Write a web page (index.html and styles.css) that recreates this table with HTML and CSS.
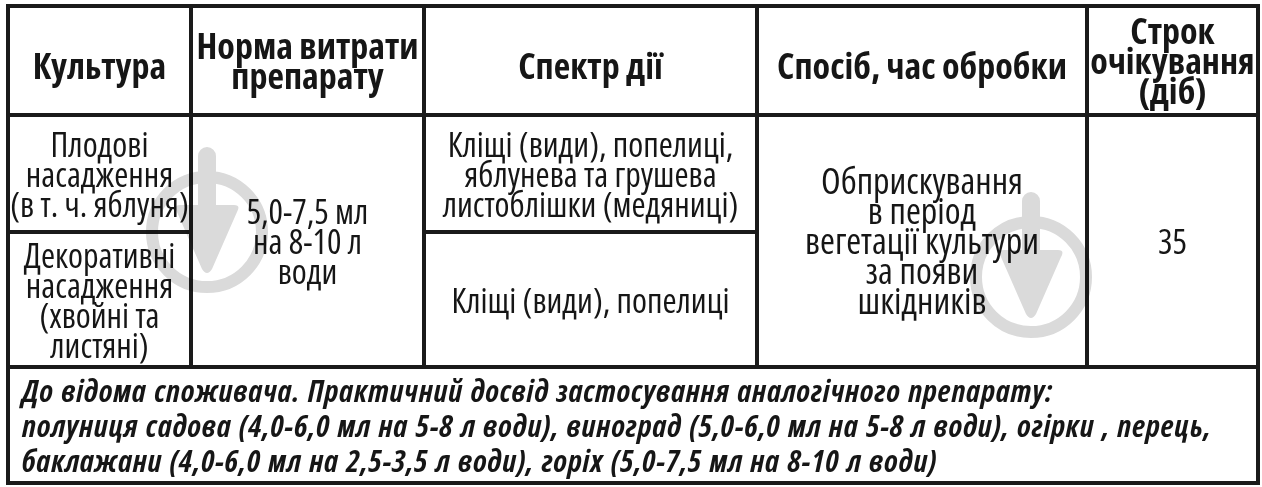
FILE: index.html
```html
<!DOCTYPE html>
<html lang="uk">
<head>
<meta charset="utf-8">
<link rel="stylesheet" href="styles.css">
</head>
<body>
<div class="sheet">
  <table class="grid">
    <colgroup>
      <col class="c1"><col class="c2"><col class="c3"><col class="c4"><col class="c5">
    </colgroup>
    <tr class="head">
      <th class="low">Культура</th>
      <th>Норма витрати<br>препарату</th>
      <th class="low">Спектр дії</th>
      <th class="low">Спосіб, час обробки</th>
      <th>Строк<br>очікування<br>(діб)</th>
    </tr>
    <tr class="top">
      <td class="split">Плодові<br>насадження<br>(в т. ч. яблуня)</td>
      <td rowspan="2">5,0-7,5 мл<br>на 8-10 л<br>води</td>
      <td class="split">Кліщі (види), попелиці,<br>яблунева та грушева<br>листоблішки (медяниці)</td>
      <td rowspan="2" class="method">Обприскування<br>в період<br>вегетації культури<br>за появи<br>шкідників</td>
      <td rowspan="2">35</td>
    </tr>
    <tr class="bottom">
      <td>Декоративні<br>насадження<br>(хвойні та<br>листяні)</td>
      <td>Кліщі (види), попелиці</td>
    </tr>
    <tr class="foot">
      <td colspan="5">До відома споживача. Практичний досвід застосування аналогічного препарату:<br>полуниця садова (4,0-6,0 мл на 5-8 л води), виноград (5,0-6,0 мл на 5-8 л води), огірки , перець,<br>баклажани (4,0-6,0 мл на 2,5-3,5 л води), горіх (5,0-7,5 мл на 8-10 л води)</td>
    </tr>
  </table>
  <svg class="mark mark-a" viewBox="0 0 140 180" width="140" height="180" aria-hidden="true">
    <circle cx="70" cy="95" r="55" fill="none" stroke="#dadada" stroke-width="12"/>
    <path d="M61 19 a9 9 0 0 1 18 0 V68 H97 q7 0 3 7 L75 132 q-5 8 -10 0 L40 75 q-4 -7 3 -7 H61 Z" fill="#dadada"/>
  </svg>
  <svg class="mark mark-b" viewBox="0 0 140 180" width="140" height="180" aria-hidden="true">
    <circle cx="70" cy="95" r="55" fill="none" stroke="#dadada" stroke-width="12"/>
    <path d="M61 19 a9 9 0 0 1 18 0 V68 H97 q7 0 3 7 L75 132 q-5 8 -10 0 L40 75 q-4 -7 3 -7 H61 Z" fill="#dadada"/>
  </svg>
</div>
</body>
</html>
```
FILE: styles.css
```css
html, body {
  margin: 0;
  padding: 0;
  background: #ffffff;
}
body {
  font-family: "Open Sans", "DejaVu Sans Condensed", sans-serif;
  font-stretch: 75%;
  color: #161616;
}
.sheet {
  position: relative;
  width: 1254px;
  padding: 4px 0 0 6px;
}
.grid {
  border-collapse: collapse;
  table-layout: fixed;
  width: 1254px;
  border: 4px solid #1a1a1a;
  position: relative;
  z-index: 1;
}
.c1 { width: 183px; }
.c2 { width: 233px; }
.c3 { width: 333px; }
.c4 { width: 330px; }
.c5 { width: 171px; }
.grid th, .grid td {
  border: 4px solid #1a1a1a;
  padding: 0;
  text-align: center;
  vertical-align: middle;
  white-space: nowrap;
  overflow: hidden;
}
.head th {
  height: 105px;
  font-weight: 700;
  font-size: 36px;
  line-height: 30px;
}
.head th.low { padding-top: 10px; height: 95px; }
.top td, .bottom td {
  font-size: 34px;
  line-height: 30px;
  font-weight: 400;
}
.top td.method { font-size: 36px; }
.top td { height: 113px; }
.bottom td { height: 131px; }
.grid td.split { border-bottom-width: 3px; }
.foot td {
  height: 112px;
  text-align: left;
  padding-left: 12px;
  font-weight: 700;
  font-style: italic;
  font-size: 31px;
  letter-spacing: 0.7px;
  word-spacing: 1.5px;
  line-height: 35px;
}
.mark {
  position: absolute;
  z-index: 2;
  mix-blend-mode: multiply;
  pointer-events: none;
}
.mark-a { left: 137px; top: 137px; }
.mark-b { left: 961px; top: 182px; }
```
